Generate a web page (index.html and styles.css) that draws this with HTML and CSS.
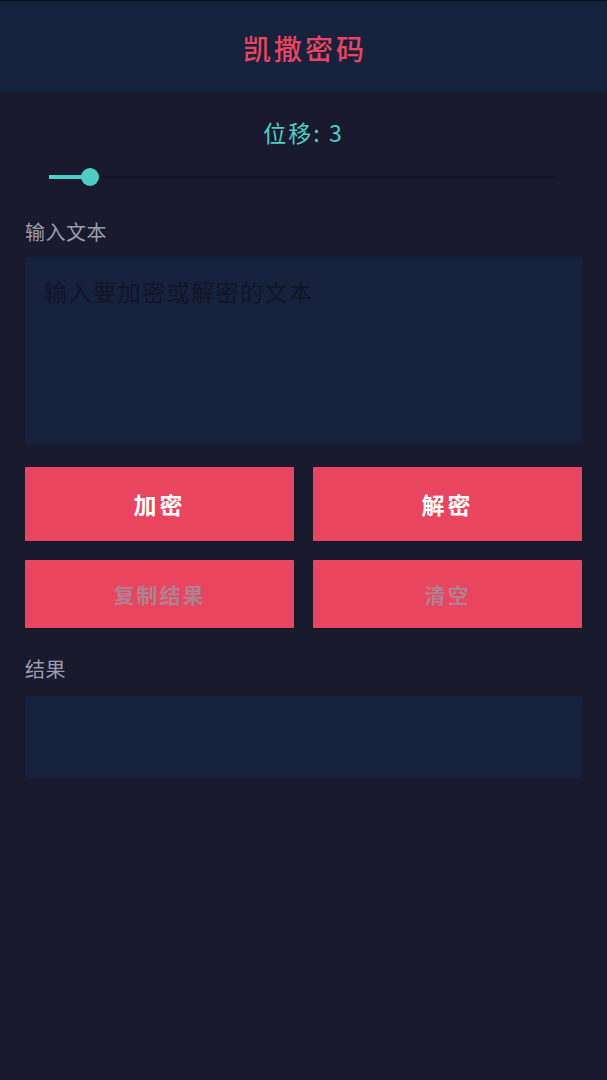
FILE: index.html
```html
<!DOCTYPE html>
<html lang="zh-CN">
<head>
<meta charset="utf-8">
<title>凯撒密码</title>
<link rel="stylesheet" href="styles.css">
</head>
<body>
<header class="app-bar"><h1 class="title">凯撒密码</h1></header>
<main class="content">
  <div class="shift-label">位移: 3</div>
  <div class="slider">
    <div class="track"></div>
    <div class="track-active" style="width: 33px"></div>
    <div class="thumb" style="left: 32px"></div>
  </div>
  <div class="field-label">输入文本</div>
  <div class="input-box"><span class="placeholder">输入要加密或解密的文本</span></div>
  <div class="btn-grid">
    <button class="btn btn-primary">加密</button>
    <button class="btn btn-primary">解密</button>
    <button class="btn btn-disabled">复制结果</button>
    <button class="btn btn-disabled">清空</button>
  </div>
  <div class="field-label result-label">结果</div>
  <div class="result-box"></div>
</main>
</body>
</html>
```
FILE: styles.css
```css
html, body {
  margin: 0;
  padding: 0;
  background: #1a1a2e;
  height: 100%;
}
body {
  font-family: "Noto Sans CJK SC", "Noto Sans", sans-serif;
}
.app-bar {
  height: 91px;
  border-top: 1px solid #0c0c18;
  background: #16213e;
  display: flex;
  align-items: center;
  justify-content: center;
}
.title {
  margin: 0;
  font-size: 28px;
  font-weight: 500;
  letter-spacing: 3px;
  color: #e94560;
  line-height: 1;
  padding-top: 2px;
  padding-left: 3px;
}
.content {
  padding: 0 25px;
}
.shift-label {
  margin-top: 25px;
  text-align: center;
  color: #4ecdc4;
  font-size: 23px;
  line-height: 30px;
  letter-spacing: 2px;
}
.slider {
  position: relative;
  margin: 20px 24px 0 24px;
  height: 20px;
}
.track {
  position: absolute;
  left: 0;
  right: 0;
  top: 9px;
  height: 2px;
  background: #15152a;
}
.track-active {
  position: absolute;
  left: 0;
  top: 8px;
  height: 4px;
  background: #4ecdc4;
}
.thumb {
  position: absolute;
  top: 1px;
  width: 18px;
  height: 18px;
  border-radius: 50%;
  background: #4ecdc4;
}
.field-label {
  margin-top: 31px;
  color: #9c9cac;
  font-size: 20px;
  line-height: 28px;
  letter-spacing: 0.5px;
}
.input-box {
  margin-top: 11px;
  height: 186px;
  background: #16213e;
  border-radius: 2px;
  padding: 18px 19px;
  box-sizing: border-box;
}
.placeholder {
  color: #121528;
  font-size: 23px;
  line-height: 32px;
  letter-spacing: 1.5px;
}
.btn-grid {
  margin-top: 24px;
  display: grid;
  grid-template-columns: 1fr 1fr;
  grid-template-rows: 74px 68px;
  column-gap: 19px;
  row-gap: 19px;
}
.btn {
  border: 0;
  border-radius: 1px;
  background: #e94560;
  font-family: inherit;
  font-weight: 700;
  padding: 0;
  box-shadow: 0 1px 1px rgba(0,0,0,0.25);
}
.btn-primary {
  color: #ffffff;
  font-size: 23px;
  letter-spacing: 3px;
}
.btn-disabled {
  color: #b18090;
  font-size: 21px;
  letter-spacing: 2px;
}
.result-label {
  margin-top: 27px;
}
.result-box {
  margin-top: 13px;
  height: 82px;
  background: #16213e;
  border-radius: 3px;
}
```
